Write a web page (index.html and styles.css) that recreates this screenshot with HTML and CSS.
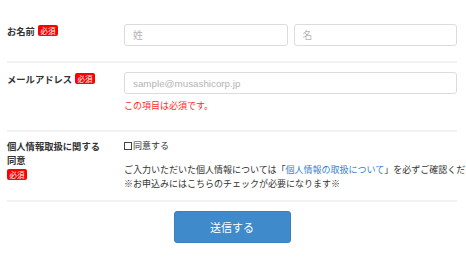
FILE: index.html
```html
<!DOCTYPE html>
<html lang="ja">
<head>
<meta charset="utf-8">
<title>お問い合わせ</title>
<link rel="stylesheet" href="styles.css">
</head>
<body>
<form class="form">
  <div class="row row-first">
    <div class="label"><span class="label-text">お名前</span><span class="badge">必須</span></div>
    <div class="field">
      <div class="pair">
        <input class="input" type="text" placeholder="姓">
        <input class="input" type="text" placeholder="名">
      </div>
    </div>
  </div>
  <div class="row row-mail">
    <div class="label"><span class="label-text">メールアドレス</span><span class="badge">必須</span></div>
    <div class="field">
      <input class="input input-latin" type="text" placeholder="sample@musashicorp.jp">
      <p class="error">この項目は必須です。</p>
    </div>
  </div>
  <div class="row row-consent">
    <div class="label label-stack"><span class="label-text">個人情報取扱に関する<br>同意</span><span class="badge">必須</span></div>
    <div class="field">
      <label class="check"><span class="box"></span>同意する</label>
      <p class="note">ご入力いただいた個人情報については「<a class="link" href="#">個人情報の取扱について</a>」を必ずご確認ください。<br>※お申込みにはこちらのチェックが必要になります※</p>
    </div>
  </div>
  <div class="actions">
    <button class="submit" type="button">送信する</button>
  </div>
</form>
</body>
</html>
```
FILE: styles.css
```css
html, body {
  margin: 0;
  padding: 0;
  overflow: hidden;
  background: #fff;
}
body {
  font-family: "Noto Sans CJK JP", "Noto Sans", sans-serif;
  font-size: 9px;
  line-height: 14px;
  color: #333;
}
.form {
  margin-left: 7px;
  width: 450px;
}
.row {
  display: flex;
  border-bottom: 2px solid #f2f2f2;
}
.row-first {
  padding: 24px 0 15px;
}
.row-mail {
  padding: 9px 0 17px;
}
.row-consent {
  padding: 7px 0 9px;
}
.label {
  width: 117px;
  flex: none;
  font-weight: bold;
  display: flex;
  align-items: flex-start;
  gap: 3px;
}
.label-stack {
  flex-direction: column;
  gap: 1px;
}
.label-text {
  line-height: 14px;
  font-size: 9.3px;
}
.badge {
  display: inline-block;
  background: #f00;
  color: #fff;
  font-size: 7.5px;
  line-height: 11px;
  padding: 0 2.5px;
  border-radius: 2px;
  font-weight: normal;
  margin-top: 1px;
}
.field {
  flex: 1;
  min-width: 0;
}
.pair {
  display: flex;
  gap: 6px;
}
.input {
  display: block;
  box-sizing: border-box;
  width: 100%;
  height: 22px;
  margin: 0;
  padding: 0 8px;
  border: 1px solid #dcdcdc;
  border-radius: 3px;
  font-family: "Noto Sans CJK JP", sans-serif;
  font-size: 9.8px;
  color: #333;
  background: #fff;
  outline: none;
}
.input::placeholder {
  color: #b4b4b4;
}
.input-latin {
  font-family: "Liberation Sans", "Noto Sans CJK JP", sans-serif;
}
.error {
  margin: 5px 0 0;
  color: #ff2a2a;
}
.check {
  display: flex;
  align-items: center;
  gap: 1px;
}
.box {
  display: inline-block;
  box-sizing: border-box;
  width: 8px;
  height: 8px;
  border: 1px solid #444;
}
.note {
  margin: 10px 0 0;
  white-space: nowrap;
}
.link {
  color: #3a7fd0;
  text-decoration: none;
}
.actions {
  display: flex;
  justify-content: center;
  padding-top: 9px;
}
.submit {
  width: 117px;
  height: 32px;
  background: #3e8acb;
  border: 1px solid #3a80c0;
  border-radius: 3px;
  color: #fff;
  font-family: "Noto Sans CJK JP", sans-serif;
  font-size: 11px;
  padding: 0;
}
```
